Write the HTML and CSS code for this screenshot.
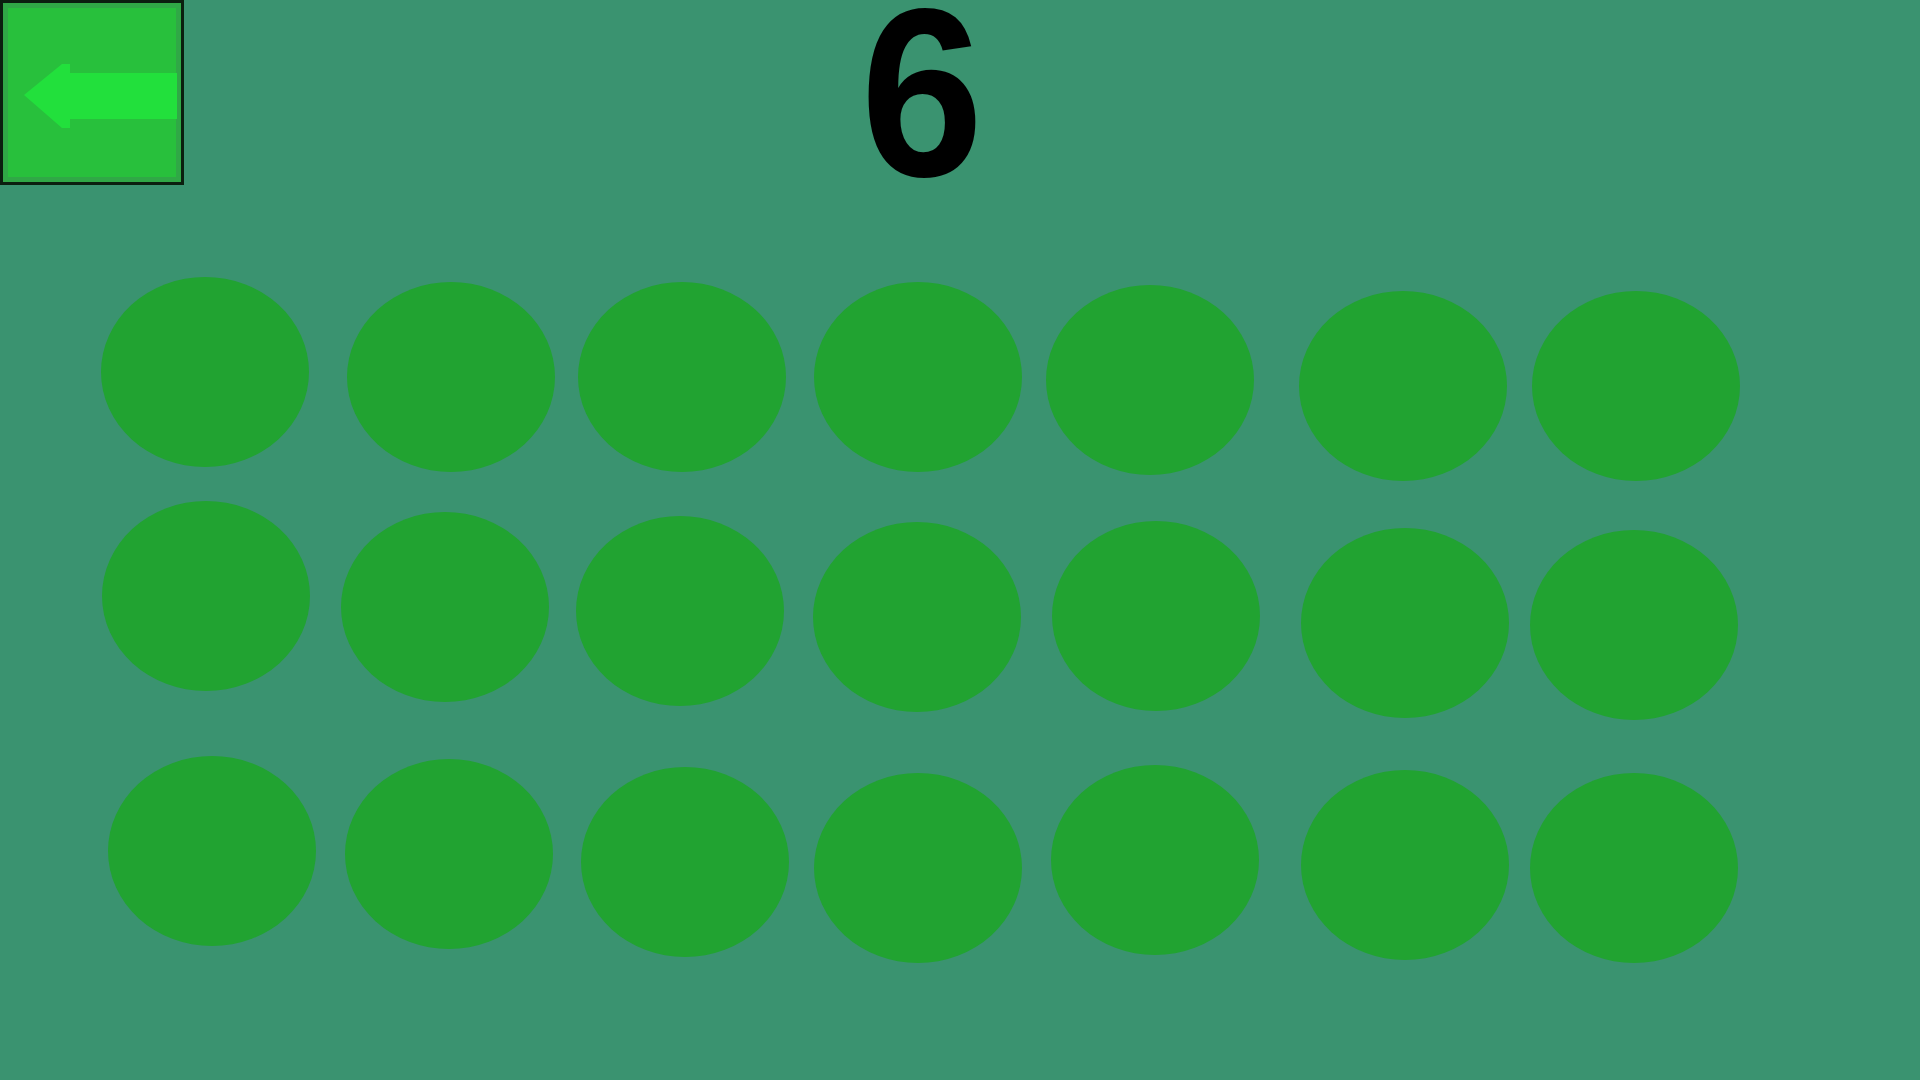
FILE: index.html
```html
<!DOCTYPE html>
<html lang="en">
<head>
<meta charset="utf-8">
<title>Count</title>
<link rel="stylesheet" href="styles.css">
</head>
<body>
<div class="screen">
  <header class="top">
    <button class="back" aria-label="Back">
      <svg class="back-arrow" viewBox="0 0 184 185" width="184" height="185" aria-hidden="true">
        <path d="M24 95 L62 64 L70 64 L70 73 L177 73 L177 119 L70 119 L70 128 L62 128 Z" fill="#22e03c"/>
      </svg>
    </button>
    <h1 class="count">6</h1>
  </header>
  <main class="board">
    <span class="dot" style="--dx:0px;--dy:-3px"></span>
    <span class="dot" style="--dx:8px;--dy:2px"></span>
    <span class="dot" style="--dx:1px;--dy:2px"></span>
    <span class="dot" style="--dx:-1px;--dy:2px"></span>
    <span class="dot" style="--dx:-7px;--dy:5px"></span>
    <span class="dot" style="--dx:8px;--dy:11px"></span>
    <span class="dot" style="--dx:3px;--dy:11px"></span>

    <span class="dot" style="--dx:1px;--dy:-21px"></span>
    <span class="dot" style="--dx:2px;--dy:-10px"></span>
    <span class="dot" style="--dx:-1px;--dy:-6px"></span>
    <span class="dot" style="--dx:-2px;--dy:0px"></span>
    <span class="dot" style="--dx:-1px;--dy:-1px"></span>
    <span class="dot" style="--dx:10px;--dy:6px"></span>
    <span class="dot" style="--dx:1px;--dy:8px"></span>

    <span class="dot" style="--dx:7px;--dy:-8px"></span>
    <span class="dot" style="--dx:6px;--dy:-5px"></span>
    <span class="dot" style="--dx:4px;--dy:3px"></span>
    <span class="dot" style="--dx:-1px;--dy:9px"></span>
    <span class="dot" style="--dx:-2px;--dy:1px"></span>
    <span class="dot" style="--dx:10px;--dy:6px"></span>
    <span class="dot" style="--dx:1px;--dy:9px"></span>
  </main>
</div>
</body>
</html>
```

FILE: styles.css
```css
html, body {
  margin: 0;
  padding: 0;
  width: 1920px;
  height: 1080px;
  overflow: hidden;
  background: #3a9370;
  font-family: "Liberation Sans", Arial, sans-serif;
}

.screen {
  width: 1920px;
  height: 1080px;
  display: flex;
  flex-direction: column;
}

.top {
  height: 185px;
  display: flex;
  align-items: flex-start;
}

.back {
  width: 184px;
  height: 185px;
  padding: 0;
  margin: 0;
  box-sizing: border-box;
  background: #28c03c;
  border: 3px solid #0b1f0f;
  box-shadow: inset 0 0 0 5px #30a846;
  position: relative;
  cursor: pointer;
  flex: none;
}

.back-arrow {
  position: absolute;
  left: -3px;
  top: -3px;
  display: block;
}

.count {
  width: 1476px;
  margin: 0;
  padding-top: 3px;
  text-align: center;
  font-family: "Liberation Sans", Arial, sans-serif;
  font-weight: 700;
  font-size: 240px;
  line-height: 0.75;
  color: #000;
  transform: scaleX(0.92);
}

.board {
  margin: 69px 0 0 86px;
  display: grid;
  grid-template-columns: repeat(7, 238px);
  grid-auto-rows: 242px;
  place-items: center;
}

.dot {
  display: block;
  width: 208px;
  height: 190px;
  border-radius: 50%;
  background: #21a331;
  transform: translate(var(--dx), var(--dy));
}
```
